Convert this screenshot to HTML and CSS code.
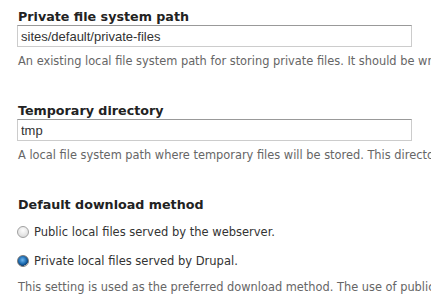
FILE: index.html
```html
<!DOCTYPE html>
<html lang="en">
<head>
    <meta charset="UTF-8">
    <title>File system</title>
    <link rel="stylesheet" href="styles.css">
</head>
<body>
    <form class="settings">
        <div class="form-item">
            <label for="private-path">Private file system path</label>
            <input type="text" id="private-path" class="form-text" value="sites/default/private-files">
            <div class="description">An existing local file system path for storing private files. It should be writable by Drupal and not accessible over the web.</div>
        </div>

        <div class="form-item">
            <label for="temp-path">Temporary directory</label>
            <input type="text" id="temp-path" class="form-text" value="tmp">
            <div class="description">A local file system path where temporary files will be stored. This directory should not be accessible over the web.</div>
        </div>

        <div class="form-item radios">
            <label class="group-label">Default download method</label>
            <div class="form-radio-item">
                <input type="radio" id="dl-public" name="download" class="form-radio">
                <label class="option" for="dl-public">Public local files served by the webserver.</label>
            </div>
            <div class="form-radio-item">
                <input type="radio" id="dl-private" name="download" class="form-radio" checked>
                <label class="option" for="dl-private">Private local files served by Drupal.</label>
            </div>
            <div class="description">This setting is used as the preferred download method. The use of public files is more efficient, but does not provide any access control.</div>
        </div>
    </form>
</body>
</html>
```

FILE: styles.css
```css
body {
    margin: 0;
    padding: 9px 0 0 17px;
    font-family: 'DejaVu Sans', Verdana, sans-serif;
    font-size: 12px;
    color: #333;
    background: #fff;
    overflow: hidden;
    width: 600px;
    height: 292px;
}
.form-item {
    margin-bottom: 35px;
}
.form-item > label,
.group-label {
    display: block;
    font-weight: bold;
    font-size: 12.7px;
    line-height: 16px;
    color: #222;
    margin: 0 0 0 1px;
}
.form-text {
    display: block;
    box-sizing: border-box;
    width: 395px;
    height: 22px;
    margin: 0;
    padding: 1px 3px;
    border: 1px solid #ccc;
    border-top-color: #999;
    font-family: 'Liberation Sans', Arial, sans-serif;
    font-size: 13px;
    color: #333;
}
.description {
    font-size: 11.4px;
    line-height: 14px;
    color: #666;
    margin: 7px 0 0 1px;
    white-space: nowrap;
}
.radios .description {
    margin-top: 9px;
}
.form-radio-item {
    display: flex;
    align-items: center;
    margin: 9px 0 0;
    height: 20px;
}
.form-radio {
    appearance: none;
    -webkit-appearance: none;
    box-sizing: border-box;
    width: 12px;
    height: 12px;
    margin: 0 5px 0 0;
    border: 1px solid #a0a0a0;
    border-radius: 50%;
    background: radial-gradient(circle at 50% 35%, #fdfdfd 0%, #e4e4e4 60%, #cfcfcf 100%);
}
.form-radio:checked {
    background:
        radial-gradient(circle at 45% 40%, #6fb7f0 0%, #1f6fb5 45%, #0b3f75 70%, transparent 73%),
        radial-gradient(circle at 50% 35%, #fdfdfd 0%, #e4e4e4 60%, #cfcfcf 100%);
    border-color: #7a7a7a;
}
.option {
    font-size: 11.5px;
    color: #333;
}
```
